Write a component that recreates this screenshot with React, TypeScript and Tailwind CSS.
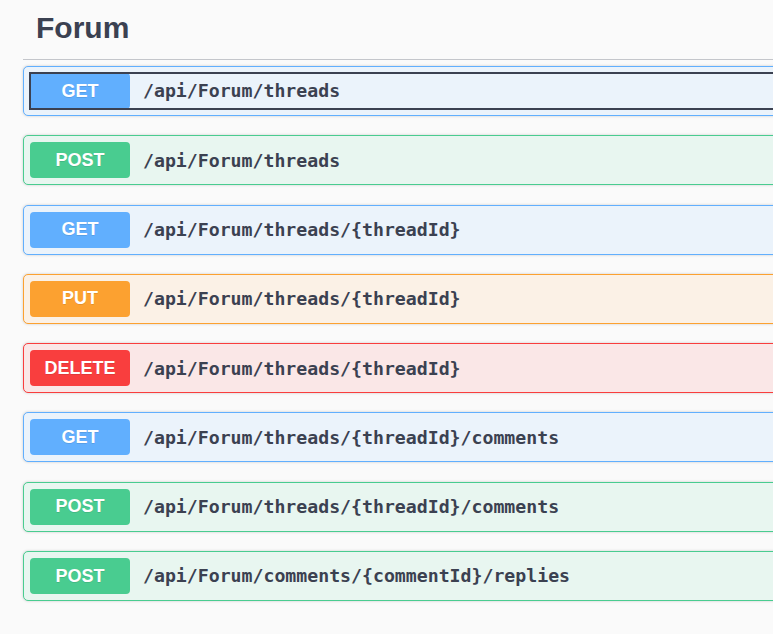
type Method = "GET" | "POST" | "PUT" | "DELETE";

interface Endpoint {
  method: Method;
  path: string;
  focused?: boolean;
}

const endpoints: Endpoint[] = [
  { method: "GET", path: "/api/Forum/threads", focused: true },
  { method: "POST", path: "/api/Forum/threads" },
  { method: "GET", path: "/api/Forum/threads/{threadId}" },
  { method: "PUT", path: "/api/Forum/threads/{threadId}" },
  { method: "DELETE", path: "/api/Forum/threads/{threadId}" },
  { method: "GET", path: "/api/Forum/threads/{threadId}/comments" },
  { method: "POST", path: "/api/Forum/threads/{threadId}/comments" },
  { method: "POST", path: "/api/Forum/comments/{commentId}/replies" },
];

// full class strings per method so tailwind picks them up
const methodStyles: Record<Method, { row: string; badge: string }> = {
  GET: { row: "border-[#61affe] bg-[#ebf3fb]", badge: "bg-[#61affe]" },
  POST: { row: "border-[#49cc90] bg-[#e8f6f0]", badge: "bg-[#49cc90]" },
  PUT: { row: "border-[#fca130] bg-[#fbf1e6]", badge: "bg-[#fca130]" },
  DELETE: { row: "border-[#f93e3e] bg-[#fae7e7]", badge: "bg-[#f93e3e]" },
};

function OperationRow({ endpoint }: { endpoint: Endpoint }) {
  const style = methodStyles[endpoint.method];
  return (
    <div
      className={`mb-[19.3px] h-[50px] rounded-[5px] border p-[6px] shadow-[0_0_3px_rgba(0,0,0,0.19)] ${style.row}`}
    >
      <div
        className={`flex h-[36px] items-center ${
          endpoint.focused ? "outline-2 outline-offset-[-1px] outline-[#3b4151]" : ""
        }`}
      >
        <span
          className={`flex h-[36px] w-[100px] shrink-0 items-center justify-center rounded-[4px] text-[18px] font-bold text-white [text-shadow:0_1px_0_rgba(0,0,0,0.1)] ${style.badge}`}
          style={{ fontFamily: '"Liberation Sans", Arial, sans-serif' }}
        >
          {endpoint.method}
        </span>
        <span
          className="pl-[13px] text-[18.2px] font-bold text-[#3b4151]"
          style={{ fontFamily: '"DejaVu Sans Mono", monospace' }}
        >
          {endpoint.path}
        </span>
      </div>
    </div>
  );
}

export default function App() {
  return (
    <div className="h-[634px] w-[773px] overflow-hidden bg-[#fafafa]">
      <div className="ml-[23px] w-[820px]">
        <h3
          className="border-b border-[#c4c6cb] pt-[12px] pb-[15px] pl-[13px] text-[30px] leading-[32px] font-bold text-[#3b4151]"
          style={{ fontFamily: '"Liberation Sans", Arial, sans-serif' }}
        >
          Forum
        </h3>
        <div className="mt-[6px]">
          {endpoints.map((ep, i) => (
            <OperationRow key={i} endpoint={ep} />
          ))}
        </div>
      </div>
    </div>
  );
}
